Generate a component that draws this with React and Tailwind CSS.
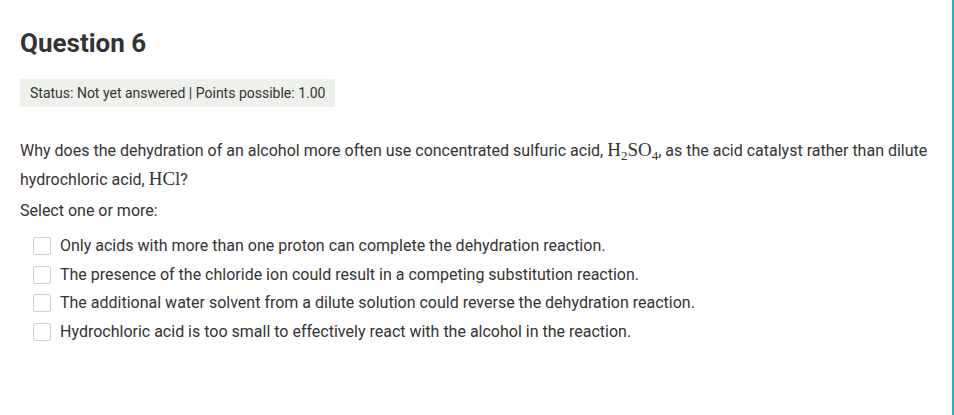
import React from "react";

const options = [
  "Only acids with more than one proton can complete the dehydration reaction.",
  "The presence of the chloride ion could result in a competing substitution reaction.",
  "The additional water solvent from a dilute solution could reverse the dehydration reaction.",
  "Hydrochloric acid is too small to effectively react with the alcohol in the reaction.",
];

function M({ children }) {
  return (
    <span className="text-[19px] leading-none" style={{ fontFamily: '"Liberation Serif", serif' }}>
      {children}
    </span>
  );
}

function Sub({ children }) {
  return <span className="text-[13px] leading-none relative top-[4px]">{children}</span>;
}

export default function App() {
  return (
    <div
      className="w-[954px] h-[415px] bg-white flex text-[#333]"
      style={{ fontFamily: "Roboto, sans-serif" }}
    >
      <div className="flex-1 px-5 pt-[27px]">
        <h2 className="text-[26px] font-bold text-[#333] leading-[32px]">Question 6</h2>
        <div className="mt-[20px] inline-block bg-[#eef0eb] px-[10px] py-[4px] text-[14px] leading-[20px]">
          Status: Not yet answered | Points possible: 1.00
        </div>
        <div className="mt-[29px] text-[16px] leading-[29px]">
          Why does the dehydration of an alcohol more often use concentrated sulfuric acid,{" "}
          <M>
            H<Sub>2</Sub>SO<Sub>4</Sub>
          </M>
          , as the acid catalyst rather than dilute hydrochloric acid, <M>HCl</M>?
        </div>
        <p className="mt-[5px] text-[16px] leading-[24px]">Select one or more:</p>
        <div className="mt-[9px] pl-[13px] flex flex-col">
          {options.map((o) => (
            <label key={o} className="flex items-center gap-[9px] h-[28.5px] text-[16px]">
              <span className="w-[18px] h-[18px] border border-[#cfd0c2] rounded-[2px] bg-white" />
              <span>{o}</span>
            </label>
          ))}
        </div>
      </div>
      <div className="w-[2px] bg-[#2aafc3]" />
    </div>
  );
}
